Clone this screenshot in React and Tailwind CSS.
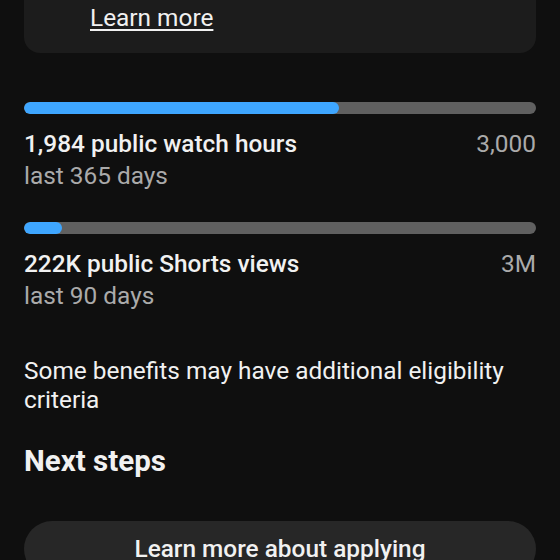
import React from "react";

const stats = [
  { label: "1,984 public watch hours", goal: "3,000", period: "last 365 days", pct: 61.5 },
  { label: "222K public Shorts views", goal: "3M", period: "last 90 days", pct: 7.4 },
];

function Stat({ stat, top }) {
  return (
    <div className={top}>
      <div className="h-3 w-full overflow-hidden rounded-full bg-[#606060]">
        <div className="h-full rounded-full bg-[#3ea6ff]" style={{ width: `${stat.pct}%` }} />
      </div>
      <div className="mt-[14px] flex items-start justify-between text-[24.4px] leading-8">
        <span className="font-medium text-[#f1f1f1]">{stat.label}</span>
        <span className="text-[#aaaaaa]">{stat.goal}</span>
      </div>
      <div className="text-[24.4px] leading-8 text-[#aaaaaa]">{stat.period}</div>
    </div>
  );
}

export default function App() {
  return (
    <div
      className="h-[560px] w-[560px] overflow-hidden bg-[#0f0f0f] px-6 text-[#f1f1f1]"
      style={{ fontFamily: "Roboto, 'Noto Sans', sans-serif" }}
    >
      {/* tail of the card above, its top is scrolled off */}
      <div className="rounded-b-2xl bg-[#1c1c1c] pb-[19px] pl-[66px] pt-[2px]">
        <a className="text-[24.4px] leading-8 underline decoration-[1.5px] underline-offset-[3px]">Learn more</a>
      </div>

      <Stat stat={stats[0]} top="mt-[49px]" />
      <Stat stat={stats[1]} top="mt-[30px]" />

      <p className="mt-[44px] text-[24.4px] leading-[29px]">
        Some benefits may have additional eligibility criteria
      </p>

      <h2 className="mt-[29px] text-[29.5px] font-bold leading-9">Next steps</h2>

      <button className="mt-[42px] flex h-14 w-full items-center justify-center rounded-full bg-[#272727] text-[24.4px] font-medium leading-8 text-[#f1f1f1]">
        Learn more about applying
      </button>
    </div>
  );
}
